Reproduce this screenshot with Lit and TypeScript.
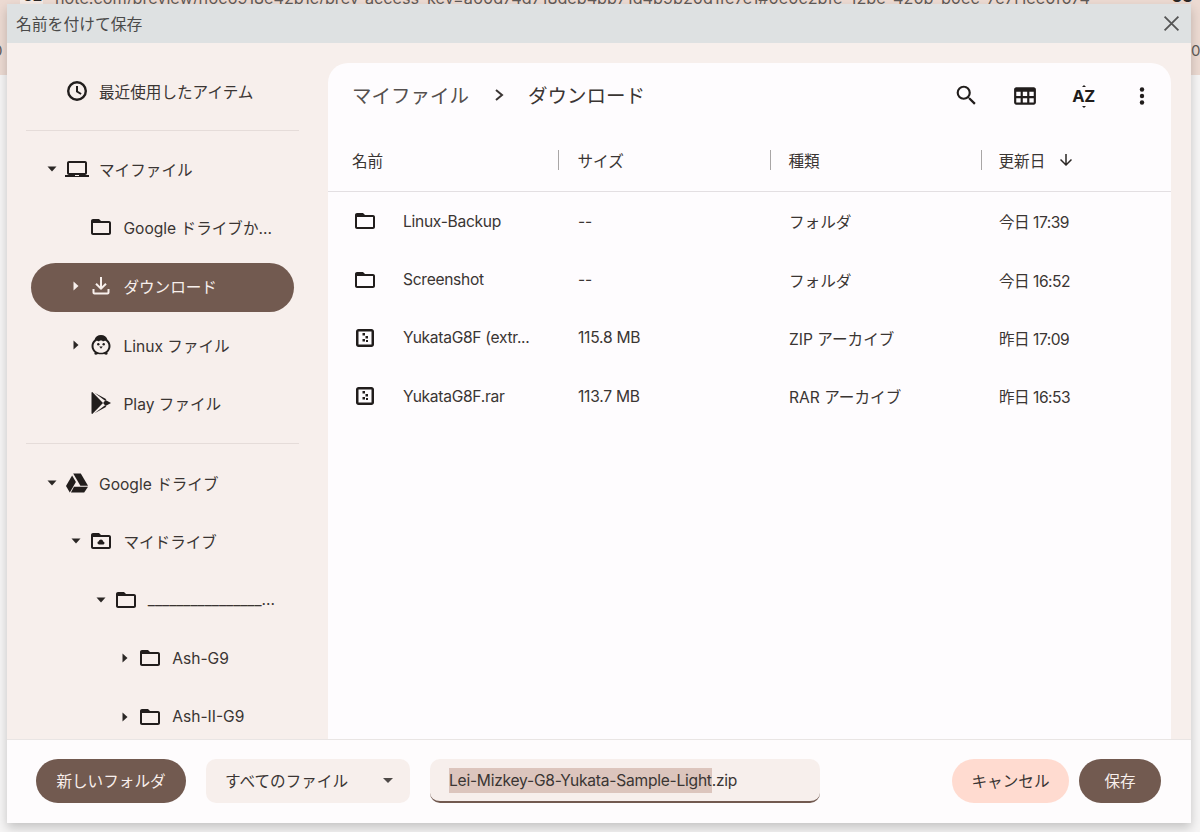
// app.ts
// Save-as file dialog, ChromeOS files app in a warm theme

import { LitElement, html, css, svg } from "lit";
import { customElement } from "lit/decorators.js";

const FOLDER = svg`<path d="M20 6h-8l-2-2H4c-1.1 0-2 .9-2 2v12c0 1.1.9 2 2 2h16c1.1 0 2-.9 2-2V8c0-1.1-.9-2-2-2zm0 12H4V8h16v10z"/>`;

const ICONS: Record<string, unknown> = {
  clock: svg`<path d="M12 2a10 10 0 1 0 0 20 10 10 0 0 0 0-20zm0 17.6a7.6 7.6 0 1 1 0-15.2 7.6 7.6 0 0 1 0 15.2z"/><path d="M13 7h-2v6l4.6 2.8 1-1.6-3.6-2.2z"/>`,
  laptop: svg`<path d="M20 18c1.1 0 2-.9 2-2V6c0-1.1-.9-2-2-2H4c-1.1 0-2 .9-2 2v10c0 1.1.9 2 2 2H0v2h24v-2h-4zM4 6h16v10H4V6z"/><rect x="10" y="18" width="4" height="1" fill="#f7efec"/>`,
  folder: FOLDER,
  download: svg`<path d="M13 3h-2v9.2L7.7 9 6.3 10.4 12 16l5.700-5.600L16.300 9 13 12.200z"/><path d="M3.500 15v3.500c0 1.100.9 2 2 2h13c1.100 0 2-.9 2-2V15h-2v3.500h-13V15z"/>`,
  linux: svg`<path fill-rule="evenodd" d="M12 2C8.800 2 6.300 4 5.500 6.800 3.600 8.300 2.500 10.500 2.500 13c0 2.600 1.200 4.900 3.100 6.400-.3.700-.3 1.300 0 1.800.7.700 2.200.5 3.300-.3 1 .3 2 .4 3.100.4s2.100-.1 3.100-.4c1.100.8 2.600 1 3.300.3.300-.5.300-1.100 0-1.800 1.900-1.500 3.100-3.800 3.100-6.400 0-2.500-1.100-4.700-3-6.200C17.700 4 15.200 2 12 2zm0 5.600c1 0 1.600.5 2 .9.900-.700 2-.9 2.800-.6 1.700 1.200 2.700 3 2.700 5.100 0 4-3.400 6.800-7.500 6.800s-7.500-2.800-7.500-6.800c0-2.100 1-3.900 2.700-5.100.8-.3 1.900-.1 2.800.6.400-.4 1-.9 2-.9z"/><circle cx="9.300" cy="11.300" r="1.200"/><circle cx="14.700" cy="11.300" r="1.200"/><path d="M10.200 13.500h3.600L12 15.800z"/>`,
  play: svg`<path d="M2.500 1.500v21l.8.500L14 12 3.300 1z"/><path d="M5.500 1.800l10.300 7.700 1.600-1.200zM5.500 22.200l10.300-7.700 1.600 1.200z"/><path d="M16.500 9l5.500 3-5.500 3-2.300-3z"/>`,
  drive: svg`<path d="M8.200 2.500h7.600l7.200 12.200h-7.600z"/><path d="M7.100 4.400l3.800 6.500L4.800 21.500 1 15z"/><path d="M9 15.700h14l-3.800 5.800H5.900z"/>`,
  mydrive: svg`<path d="M20 6h-8l-2-2H4c-1.100 0-2 .9-2 2v12c0 1.100.9 2 2 2h16c1.100 0 2-.9 2-2V8c0-1.100-.9-2-2-2zm0 12H4V8h16v10z"/><path d="M12 10.500c-1.100 0-2 .8-2.100 1.800-.9.100-1.400.7-1.400 1.500 0 .9.700 1.700 1.700 1.700h3.700c.9 0 1.600-.7 1.600-1.500 0-.8-.6-1.500-1.400-1.600-.1-1.100-1-1.900-2.100-1.900z"/>`,
  archive: svg`<path fill-rule="evenodd" d="M18.500 3h-13C4.100 3 3 4.100 3 5.500v13C3 19.900 4.100 21 5.500 21h13c1.400 0 2.500-1.100 2.500-2.500v-13C21 4.100 19.900 3 18.500 3zm0 15.500h-13v-13h13v13z"/><path d="M9.500 7h2.500v2.500H9.500zM12.500 10h2.500v2.500h-2.500zM9.500 13h2.500v2.500H9.500zM13 14h2v2h-2z"/>`,
};

type NavRow = {
  label: string;
  icon: string;
  level: number;
  arrow?: "open" | "closed";
  active?: boolean;
};

const RECENT: NavRow[] = [{ label: "最近使用したアイテム", icon: "clock", level: 0 }];

const MY_FILES: NavRow[] = [
  { label: "マイファイル", icon: "laptop", level: 0, arrow: "open" },
  { label: "Google ドライブか...", icon: "folder", level: 1 },
  { label: "ダウンロード", icon: "download", level: 1, arrow: "closed", active: true },
  { label: "Linux ファイル", icon: "linux", level: 1, arrow: "closed" },
  { label: "Play ファイル", icon: "play", level: 1 },
];

const DRIVE: NavRow[] = [
  { label: "Google ドライブ", icon: "drive", level: 0, arrow: "open" },
  { label: "マイドライブ", icon: "mydrive", level: 1, arrow: "open" },
  { label: "________________...", icon: "folder", level: 2, arrow: "open" },
  { label: "Ash-G9", icon: "folder", level: 3, arrow: "closed" },
  { label: "Ash-II-G9", icon: "folder", level: 3, arrow: "closed" },
];

const FILES = [
  { name: "Linux-Backup", icon: "folder", size: "--", type: "フォルダ", date: "今日 17:39" },
  { name: "Screenshot", icon: "folder", size: "--", type: "フォルダ", date: "今日 16:52" },
  { name: "YukataG8F (extr...", icon: "archive", size: "115.8 MB", type: "ZIP アーカイブ", date: "昨日 17:09" },
  { name: "YukataG8F.rar", icon: "archive", size: "113.7 MB", type: "RAR アーカイブ", date: "昨日 16:53" },
];

@customElement("app-root")
export class AppRoot extends LitElement {
  static styles = css`
    :host {
      display: block;
      position: relative;
      width: 1200px;
      height: 832px;
      overflow: hidden;
      background: #f6f5f5;
      font-family: Inter, "Noto Sans CJK JP", sans-serif;
      font-size: 15.6px;
      color: #3a3533;
    }

    .page-band {
      position: absolute;
      left: 0;
      top: 0;
      width: 1200px;
      height: 75px;
      background: #ecdad2;
      color: #5f5a58;
      white-space: nowrap;
    }

    .page-url {
      position: absolute;
      left: 55px;
      top: -12px;
      font-size: 16.200px;
      line-height: 20px;
    }

    .page-tab {
      position: absolute;
      left: 20px;
      top: -12px;
      width: 23px;
      padding-left: 3px;
      box-sizing: border-box;
      font-size: 15px;
      font-weight: 700;
      line-height: 16px;
      color: #2b2725;
      background: #f5ebe6;
    }

    .page-side {
      position: absolute;
      left: 1172px;
      top: -11px;
      font-size: 15px;
      font-weight: 700;
      line-height: 16px;
      color: #2b2725;
    }

    .page-mark {
      position: absolute;
      top: 42px;
      font-size: 15px;
      line-height: 18px;
    }

    .page-mark.left {
      left: -7px;
    }

    .page-mark.right {
      left: 1191px;
    }

    .dialog {
      position: absolute;
      left: 7px;
      top: 4px;
      width: 1184px;
      height: 819px;
      display: flex;
      flex-direction: column;
      box-shadow: 0 5px 10px rgba(0, 0, 0, 0.2);
    }

    .titlebar {
      flex: none;
      height: 39px;
      display: flex;
      align-items: center;
      justify-content: space-between;
      padding: 0 11px 0 9px;
      background: #dee1e2;
      font-size: 15.800px;
      color: #4a4a4a;
    }

    .titlebar svg {
      width: 17px;
      height: 17px;
      fill: none;
      stroke: #555;
      stroke-width: 1.700;
    }

    .body {
      flex: 1;
      min-height: 0;
      display: flex;
      background: #f7efec;
    }

    .sidebar {
      flex: none;
      width: 321px;
      padding-top: 19px;
    }

    .nav-section {
      display: flex;
      flex-direction: column;
    }

    .nav-rule {
      height: 1px;
      margin: 9px 29px 9px 19px;
      background: #e5dcd9;
    }

    .nav-section + .nav-rule + .nav-section + .nav-rule {
      margin: 10px 29px 9.700px 19px;
    }

    .nav-row {
      height: 58.600px;
      display: flex;
      align-items: center;
      position: relative;
      white-space: nowrap;
    }

    .nav-row.active {
      color: #f7efec;
    }

    .nav-row.active::before {
      content: "";
      position: absolute;
      left: 24px;
      top: 5.800px;
      width: 263px;
      height: 49px;
      border-radius: 25px;
      background: #725a50;
    }

    .nav-row > * {
      position: relative;
    }

    .arrow {
      flex: none;
      width: 14px;
      height: 14px;
      margin-right: 6px;
      fill: #2b2725;
    }

    .nav-row.active .arrow,
    .nav-row.active .icon {
      fill: #f7efec;
    }

    .icon {
      flex: none;
      width: 24px;
      height: 24px;
      margin-right: 10px;
      fill: #211d1c;
    }

    .main {
      flex: 1;
      margin: 20px 20px 0 0;
      border-radius: 20px 20px 0 0;
      background: #fefcfe;
      display: flex;
      flex-direction: column;
    }

    .toolbar {
      flex: none;
      height: 62px;
      padding: 0 0 4px 24px;
      display: flex;
      align-items: center;
      font-size: 19.500px;
    }

    .crumb-root {
      color: #55504e;
    }

    .crumb-sep {
      width: 14px;
      height: 14px;
      margin: 2px 22px 0 23px;
      fill: none;
      stroke: #3a3533;
      stroke-width: 2;
    }

    .tools {
      margin: 4px 0 0 auto;
      display: flex;
      align-items: center;
      padding-right: 17px;
      gap: 34.500px;
    }

    .tool {
      width: 24px;
      height: 24px;
      fill: #211d1c;
      display: block;
    }

    .az {
      width: 24px;
      height: 24px;
      position: relative;
      display: flex;
      align-items: center;
      justify-content: center;
      font-size: 16.500px;
      font-weight: 700;
      line-height: 24px;
      letter-spacing: -0.500px;
      color: #211d1c;
    }

    .az::before,
    .az::after {
      content: "";
      position: absolute;
      left: 10px;
      border-left: 2.500px solid transparent;
      border-right: 2.500px solid transparent;
    }

    .az::before {
      top: 1px;
      border-bottom: 2.500px solid #211d1c;
    }

    .az::after {
      bottom: 0;
      border-top: 2.500px solid #211d1c;
    }

    .file-grid {
      display: grid;
      grid-template-columns: 206px 212px 211px 1fr;
      padding-left: 24px;
    }

    .head {
      flex: none;
      height: 63px;
      align-items: center;
      border-bottom: 1px solid #e3dfe2;
      box-sizing: border-box;
    }

    .head-cell {
      display: flex;
      align-items: center;
      height: 20px;
      padding-left: 18.500px;
      border-left: 1.500px solid #a9a6a6;
    }

    .head-cell:first-child {
      padding-left: 0;
      border-left: 0;
    }

    .head-cell:nth-child(3) {
      padding-left: 17.500px;
    }

    .head-cell:last-child {
      padding-left: 16.500px;
    }

    .sort {
      width: 18px;
      height: 18px;
      margin-left: 12px;
      fill: #2b2725;
    }

    .file-row {
      height: 58.400px;
      align-items: center;
    }

    .file-name {
      display: flex;
      align-items: center;
      white-space: nowrap;
      letter-spacing: -0.300px;
    }

    .file-name svg {
      flex: none;
      width: 24px;
      height: 24px;
      margin-left: 1px;
      margin-right: 26px;
      fill: #211d1c;
    }

    .file-cell {
      padding-left: 20px;
      letter-spacing: -0.250px;
    }

    .file-cell.type {
      padding-left: 19px;
      letter-spacing: 0;
    }

    .file-cell.date {
      padding-left: 18px;
      letter-spacing: -0.500px;
    }

    .footer {
      flex: none;
      height: 84px;
      box-sizing: border-box;
      padding: 19px 30px 0 29px;
      display: flex;
      gap: 20px;
      background: #fefcfd;
      border-top: 1px solid #e9e5e4;
    }

    .btn {
      height: 44px;
      padding-bottom: 2px;
      border-radius: 22px;
      display: flex;
      align-items: center;
      justify-content: center;
      box-sizing: border-box;
    }

    .btn.solid {
      background: #725a50;
      color: #f8efec;
    }

    .btn.soft {
      background: #ffdbd0;
      color: #3a3533;
    }

    .new-folder {
      width: 150px;
    }

    .select {
      width: 204px;
      height: 44px;
      box-sizing: border-box;
      padding: 0 17px 2px 19px;
      border-radius: 10px;
      background: #f7efec;
      display: flex;
      align-items: center;
      justify-content: space-between;
    }

    .select i {
      border-left: 5px solid transparent;
      border-right: 5px solid transparent;
      border-top: 5px solid #4f4a48;
    }

    .name-input {
      width: 390px;
      height: 44px;
      box-sizing: border-box;
      padding-left: 19px;
      border-radius: 10px;
      background: #f7efec;
      border-bottom: 2px solid #725a50;
      display: flex;
      align-items: center;
      white-space: nowrap;
      letter-spacing: -0.250px;
    }

    .name-input mark {
      background: #dcc5bd;
      color: inherit;
      line-height: 25px;
    }

    .actions {
      margin-left: auto;
      display: flex;
      gap: 10px;
    }

    .cancel {
      width: 117px;
    }

    .save {
      width: 82px;
    }
  `;

  private navRow(row: NavRow) {
    return html`
      <div
        class="nav-row ${row.active ? "active" : ""}"
        style="padding-left:${38 + row.level * 24.4}px"
      >
        <svg class="arrow" viewBox="0 0 14 14">
          ${row.arrow === "open" ? svg`<path d="M2.500 4.500h9L7 9.500z"/>` : ""}
          ${row.arrow === "closed" ? svg`<path d="M4.500 2.500v9l5-4.500z"/>` : ""}
        </svg>
        <svg class="icon" viewBox="0 0 24 24">${ICONS[row.icon]}</svg>
        <span>${row.label}</span>
      </div>
    `;
  }

  render() {
    return html`
      <div class="page-band">
        <div class="page-tab">62</div>
        <div class="page-url">note.com/preview/n6c6918e42b1c/prev_access_key=a60d74d718deb4bb71d4b9b20d1fe7e1#0e0c2bfe-12be-420b-b0ec-7e7f1ee0f074</div>
        <div class="page-side">SC</div>
        <div class="page-mark left">0</div>
        <div class="page-mark right">0</div>
      </div>
      <div class="dialog">
        <div class="titlebar">
          <span>名前を付けて保存</span>
          <svg viewBox="0 0 16 16"><path d="M1.500 1.500l13 13M14.500 1.500l-13 13" /></svg>
        </div>
        <div class="body">
          <nav class="sidebar">
            <div class="nav-section">${RECENT.map((r) => this.navRow(r))}</div>
            <div class="nav-rule"></div>
            <div class="nav-section">${MY_FILES.map((r) => this.navRow(r))}</div>
            <div class="nav-rule"></div>
            <div class="nav-section">${DRIVE.map((r) => this.navRow(r))}</div>
          </nav>
          <section class="main">
            <div class="toolbar">
              <span class="crumb-root">マイファイル</span>
              <svg class="crumb-sep" viewBox="0 0 14 14"><path d="M4 2l6 5-6 5" /></svg>
              <span>ダウンロード</span>
              <div class="tools">
                <svg class="tool" viewBox="1.500 1.500 22 22"><path d="M15.500 14h-.79l-.28-.27A6.471 6.471 0 0 0 16 9.500 6.500 6.500 0 1 0 9.500 16c1.610 0 3.090-.59 4.230-1.570l.27.28v.79l5 4.990L20.490 19l-4.990-5zm-6 0C7.010 14 5 11.990 5 9.500S7.010 5 9.500 5 14 7.010 14 9.500 11.990 14 9.500 14z" /></svg>
                <svg class="tool" viewBox="1 1 22 22"><path d="M20 4H4c-1.100 0-2 .9-2 2v12c0 1.100.9 2 2 2h16c1.100 0 2-.9 2-2V6c0-1.100-.9-2-2-2zM8 18H4v-4h4v4zm0-6H4V8h4v4zm6 6h-4v-4h4v4zm0-6h-4V8h4v4zm6 6h-4v-4h4v4zm0-6h-4V8h4v4z" /></svg>
                <div class="az">AZ</div>
                <svg class="tool" viewBox="0 0 24 24"><circle cx="12" cy="5.500" r="2.200" /><circle cx="12" cy="12" r="2.200" /><circle cx="12" cy="18.500" r="2.200" /></svg>
              </div>
            </div>
            <div class="file-grid head">
              <div class="head-cell">名前</div>
              <div class="head-cell">サイズ</div>
              <div class="head-cell">種類</div>
              <div class="head-cell">
                更新日
                <svg class="sort" viewBox="0 0 24 24"><path d="M20 12l-1.400-1.400-5.600 5.600V4h-2v12.200l-5.600-5.600L4 12l8 8z" /></svg>
              </div>
            </div>
            ${FILES.map(
              (f) => html`
                <div class="file-grid file-row">
                  <div class="file-name">
                    <svg viewBox="0 0 24 24">${ICONS[f.icon]}</svg>
                    ${f.name}
                  </div>
                  <div class="file-cell">${f.size}</div>
                  <div class="file-cell type">${f.type}</div>
                  <div class="file-cell date">${f.date}</div>
                </div>
              `
            )}
          </section>
        </div>
        <div class="footer">
          <div class="btn solid new-folder">新しいフォルダ</div>
          <div class="select"><span>すべてのファイル</span><i></i></div>
          <div class="name-input"><mark>Lei-Mizkey-G8-Yukata-Sample-Light</mark>.zip</div>
          <div class="actions">
            <div class="btn soft cancel">キャンセル</div>
            <div class="btn solid save">保存</div>
          </div>
        </div>
      </div>
    `;
  }
}
